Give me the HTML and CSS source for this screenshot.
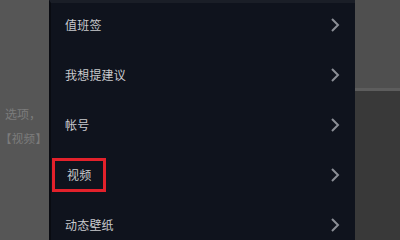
FILE: index.html
```html
<!DOCTYPE html>
<html lang="zh">
<head>
<meta charset="utf-8">
<link rel="stylesheet" href="styles.css">
</head>
<body>
<div class="screen">
  <div class="side-left">
    <p class="bg-line first">选项，</p>
    <p class="bg-line second">【视频】</p>
  </div>
  <div class="panel">
    <div class="item"><span class="label">值班签</span><svg class="chev" viewBox="0 0 10 16"><path d="M2 2 L8 8 L2 14"/></svg></div>
    <div class="item"><span class="label">我想提建议</span><svg class="chev" viewBox="0 0 10 16"><path d="M2 2 L8 8 L2 14"/></svg></div>
    <div class="item"><span class="label">帐号</span><svg class="chev" viewBox="0 0 10 16"><path d="M2 2 L8 8 L2 14"/></svg></div>
    <div class="item"><span class="label boxed">视频</span><svg class="chev" viewBox="0 0 10 16"><path d="M2 2 L8 8 L2 14"/></svg></div>
    <div class="item"><span class="label">动态壁纸</span><svg class="chev" viewBox="0 0 10 16"><path d="M2 2 L8 8 L2 14"/></svg></div>
  </div>
  <div class="side-right">
    <div class="r-top"></div>
    <div class="r-line"></div>
    <div class="r-bottom"></div>
  </div>
</div>
</body>
</html>
```
FILE: styles.css
```css
* { box-sizing: border-box; }
html, body { margin: 0; padding: 0; }
body {
  width: 400px;
  height: 240px;
  overflow: hidden;
  background: #555555;
  font-family: "Noto Sans CJK SC", "Noto Sans", sans-serif;
}
.screen {
  display: flex;
  width: 400px;
  height: 240px;
}
.side-left {
  width: 49px;
  flex: none;
  background: #565656;
  overflow: hidden;
  padding-top: 102px;
}
.bg-line {
  margin: 0;
  white-space: nowrap;
  font-size: 12px;
  line-height: 24px;
  color: #7c7c7c;
}
.bg-line.first { padding-left: 5px; }
.bg-line.second { font-size: 11.5px; letter-spacing: 0.3px; }
.panel {
  width: 306px;
  flex: none;
  background: #0f131d;
  border-left: 2px solid #090b11;
  border-top: 3px solid #1a1e27;
  display: flex;
  flex-direction: column;
}
.item {
  height: 50px;
  flex: none;
  display: flex;
  align-items: center;
  justify-content: space-between;
  padding: 0 15px 0 14px;
}
.item:first-child { margin-top: -3px; }
.label {
  font-size: 12px;
  color: #c9cacd;
  line-height: 16px;
  letter-spacing: 0.2px;
}
.boxed {
  outline: 3px solid #e3212b;
  padding: 6px 12px 6px 12px;
  margin-left: -10px;
}
.chev {
  width: 10px;
  height: 16px;
  fill: none;
  stroke: #8b8e96;
  stroke-width: 2;
}
.side-right {
  flex: 1;
  display: flex;
  flex-direction: column;
}
.r-top { height: 88px; background: #4f4f4f; }
.r-line { height: 3px; background: #5d5d5d; }
.r-bottom { flex: 1; background: #393939; }
```
